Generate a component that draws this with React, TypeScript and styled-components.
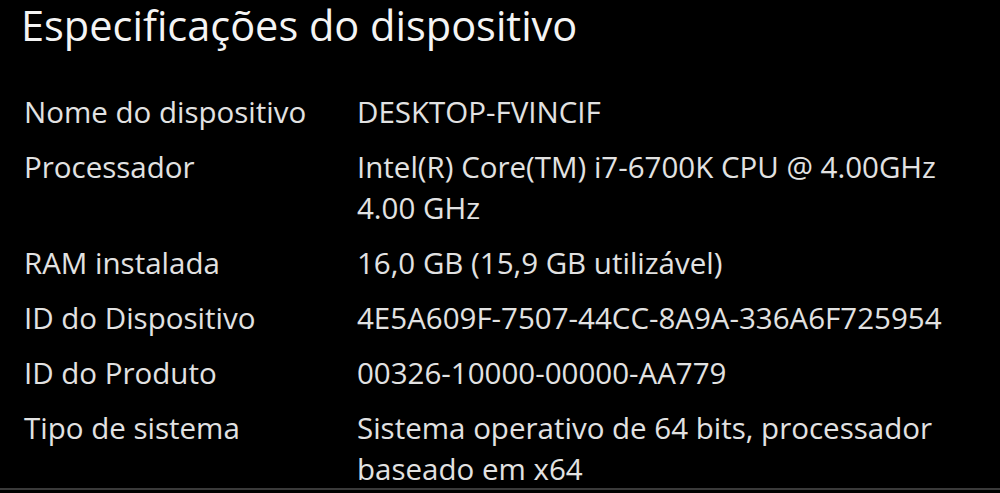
import styled, { createGlobalStyle } from 'styled-components';

const GlobalStyle = createGlobalStyle`
  html, body {
    margin: 0;
    padding: 0;
    background: #000;
  }
  body {
    font-family: 'Open Sans', 'Noto Sans', 'Liberation Sans', sans-serif;
    -webkit-font-smoothing: antialiased;
  }
`;

const Page = styled.main`
  box-sizing: border-box;
  width: 1000px;
  height: 493px;
  padding: 0 0 0 21px;
  background: #000;
  border-bottom: 2px solid #3a3a3a;
`;

const Title = styled.h1`
  margin: -3px 0 0;
  font-size: 41.5px;
  line-height: 57px;
  font-weight: 400;
  color: #f4f4f4;
`;

const SpecList = styled.dl`
  display: grid;
  grid-template-columns: 333px 630px;
  row-gap: 14px;
  margin: 37px 0 0 3px;
`;

const Label = styled.dt`
  margin: 0;
  font-size: 29.5px;
  line-height: 41px;
  color: #e2e2e2;
`;

const Value = styled.dd`
  margin: 0;
  font-size: 29.5px;
  line-height: 41px;
  color: #e2e2e2;
`;

const specs: [string, string][] = [
  ['Nome do dispositivo', 'DESKTOP-FVINCIF'],
  ['Processador', 'Intel(R) Core(TM) i7-6700K CPU @ 4.00GHz 4.00 GHz'],
  ['RAM instalada', '16,0 GB (15,9 GB utilizável)'],
  ['ID do Dispositivo', '4E5A609F-7507-44CC-8A9A-336A6F725954'],
  ['ID do Produto', '00326-10000-00000-AA779'],
  ['Tipo de sistema', 'Sistema operativo de 64 bits, processador baseado em x64'],
];

export default function App() {
  return (
    <>
      <GlobalStyle />
      <Page>
        <Title>Especificações do dispositivo</Title>
        <SpecList>
          {specs.map(([label, value]) => (
            <Spec key={label} label={label} value={value} />
          ))}
        </SpecList>
      </Page>
    </>
  );
}

function Spec({ label, value }: { label: string; value: string }) {
  return (
    <>
      <Label>{label}</Label>
      <Value>{value}</Value>
    </>
  );
}
